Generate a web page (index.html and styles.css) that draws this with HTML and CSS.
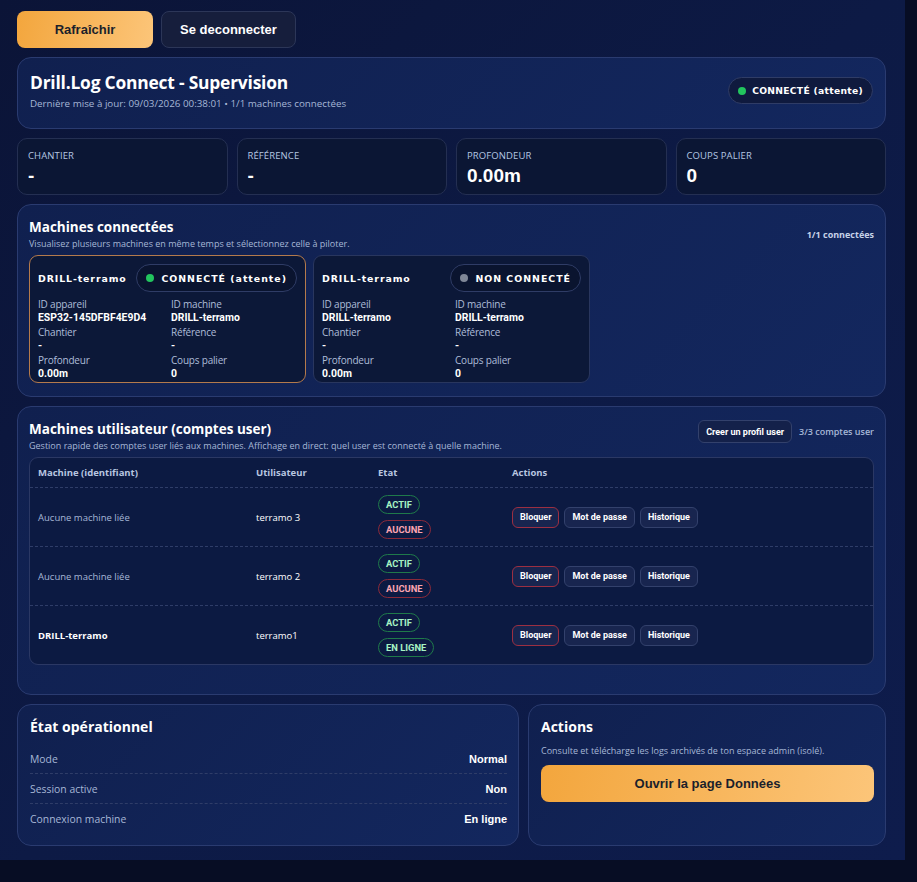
FILE: index.html
```html
<!DOCTYPE html>
<html lang="fr">
<head>
  <meta charset="UTF-8" />
  <meta name="viewport" content="width=device-width, initial-scale=1.0"/>
  <title>Drill.Log Connect - Supervision</title>
  <link rel="stylesheet" href="styles.css">
</head>
<body>
  <div class="page">

    <!-- Barre du haut -->
    <div class="toolbar">
      <button class="btn btn-primary">Rafraîchir</button>
      <button class="btn btn-dark">Se deconnecter</button>
    </div>

    <!-- En-tete -->
    <div class="card header">
      <div>
        <h1>Drill.Log Connect - Supervision</h1>
        <p class="muted small">Dernière mise à jour: 09/03/2026 00:38:01 • 1/1 machines connectées</p>
      </div>
      <span class="pill pill-head"><i class="dot dot-on"></i>CONNECTÉ (attente)</span>
    </div>

    <!-- Stats -->
    <div class="stats">
      <div class="stat"><span class="stat-label">CHANTIER</span><span class="stat-value">-</span></div>
      <div class="stat"><span class="stat-label">RÉFÉRENCE</span><span class="stat-value">-</span></div>
      <div class="stat"><span class="stat-label">PROFONDEUR</span><span class="stat-value">0.00m</span></div>
      <div class="stat"><span class="stat-label">COUPS PALIER</span><span class="stat-value">0</span></div>
    </div>

    <!-- Machines connectees -->
    <div class="card section">
      <div class="section-head">
        <div>
          <h2>Machines connectées</h2>
          <p class="muted tiny">Visualisez plusieurs machines en même temps et sélectionnez celle à piloter.</p>
        </div>
        <span class="count">1/1 connectées</span>
      </div>
      <div class="machines">
        <div class="machine selected">
          <div class="machine-top">
            <span class="machine-name">DRILL-terramo</span>
            <span class="pill pill-card"><i class="dot dot-on"></i>CONNECTÉ (attente)</span>
          </div>
          <div class="machine-grid">
            <div><span class="lbl">ID appareil</span><span class="val">ESP32-145DFBF4E9D4</span></div>
            <div><span class="lbl">ID machine</span><span class="val">DRILL-terramo</span></div>
            <div><span class="lbl">Chantier</span><span class="val">-</span></div>
            <div><span class="lbl">Référence</span><span class="val">-</span></div>
            <div><span class="lbl">Profondeur</span><span class="val">0.00m</span></div>
            <div><span class="lbl">Coups palier</span><span class="val">0</span></div>
          </div>
        </div>
        <div class="machine">
          <div class="machine-top">
            <span class="machine-name">DRILL-terramo</span>
            <span class="pill pill-card"><i class="dot dot-off"></i>NON CONNECTÉ</span>
          </div>
          <div class="machine-grid">
            <div><span class="lbl">ID appareil</span><span class="val">DRILL-terramo</span></div>
            <div><span class="lbl">ID machine</span><span class="val">DRILL-terramo</span></div>
            <div><span class="lbl">Chantier</span><span class="val">-</span></div>
            <div><span class="lbl">Référence</span><span class="val">-</span></div>
            <div><span class="lbl">Profondeur</span><span class="val">0.00m</span></div>
            <div><span class="lbl">Coups palier</span><span class="val">0</span></div>
          </div>
        </div>
      </div>
    </div>

    <!-- Comptes user -->
    <div class="card section users">
      <div class="section-head">
        <div>
          <h2>Machines utilisateur (comptes user)</h2>
          <p class="muted tiny">Gestion rapide des comptes user liés aux machines. Affichage en direct: quel user est connecté à quelle machine.</p>
        </div>
        <div class="head-actions">
          <button class="btn-sm">Creer un profil user</button>
          <span class="count light">3/3 comptes user</span>
        </div>
      </div>
      <div class="table">
        <div class="row thead">
          <span>Machine (identifiant)</span>
          <span>Utilisateur</span>
          <span>Etat</span>
          <span>Actions</span>
        </div>
        <div class="row">
          <span class="muted">Aucune machine liée</span>
          <span>terramo 3</span>
          <span class="tags"><b class="tag tag-ok">ACTIF</b><b class="tag tag-ko">AUCUNE</b></span>
          <span class="acts"><button class="btn-sm btn-red">Bloquer</button><button class="btn-sm">Mot de passe</button><button class="btn-sm">Historique</button></span>
        </div>
        <div class="row">
          <span class="muted">Aucune machine liée</span>
          <span>terramo 2</span>
          <span class="tags"><b class="tag tag-ok">ACTIF</b><b class="tag tag-ko">AUCUNE</b></span>
          <span class="acts"><button class="btn-sm btn-red">Bloquer</button><button class="btn-sm">Mot de passe</button><button class="btn-sm">Historique</button></span>
        </div>
        <div class="row">
          <span class="strong">DRILL-terramo</span>
          <span>terramo1</span>
          <span class="tags"><b class="tag tag-ok">ACTIF</b><b class="tag tag-ok">EN LIGNE</b></span>
          <span class="acts"><button class="btn-sm btn-red">Bloquer</button><button class="btn-sm">Mot de passe</button><button class="btn-sm">Historique</button></span>
        </div>
      </div>
    </div>

    <!-- Bas de page -->
    <div class="bottom">
      <div class="card panel">
        <h2>État opérationnel</h2>
        <div class="kv"><span>Mode</span><b>Normal</b></div>
        <div class="kv"><span>Session active</span><b>Non</b></div>
        <div class="kv"><span>Connexion machine</span><b>En ligne</b></div>
      </div>
      <div class="card panel">
        <h2>Actions</h2>
        <p class="muted tiny desc">Consulte et télécharge les logs archivés de ton espace admin (isolé).</p>
        <button class="btn btn-primary btn-wide">Ouvrir la page Données</button>
      </div>
    </div>

  </div>
</body>
</html>
```

FILE: styles.css
```css
/* Base */
body {
  margin: 0;
  background: #070d24;
  color: #fff;
  font-family: "Open Sans", "Noto Sans", sans-serif;
}
.page {
  width: 869px;
  padding: 11px 19px 14px 17px;
  background: linear-gradient(135deg, #0b1437 0%, #0d1a45 50%, #0e1c4c 100%);
  display: flex;
  flex-direction: column;
  gap: 9px;
}
h1, h2, p { margin: 0; }
.muted { color: #a6b7d6; }
.small { font-size: 9.8px; }
.tiny { font-size: 9px; }

/* Boutons */
.toolbar {
  display: flex;
  gap: 8px;
}
.btn {
  height: 37px;
  border-radius: 8px;
  font-family: "Liberation Sans", Arial, sans-serif;
  font-weight: bold;
  font-size: 13px;
  cursor: pointer;
}
.btn-primary {
  width: 136px;
  border: none;
  color: #1b1f2b;
  background: linear-gradient(100deg, #f3a63d 0%, #fcc579 100%);
}
.btn-dark {
  width: 135px;
  border: 1px solid #2c3658;
  color: #fff;
  background: #161e3c;
}

/* Cartes */
.card {
  background: linear-gradient(135deg, #10204f 0%, #13275e 100%);
  border: 1px solid #2a3b70;
  border-radius: 14px;
  box-sizing: border-box;
}
.header {
  height: 72px;
  padding: 12px 12px 0 12px;
  display: flex;
  justify-content: space-between;
  align-items: flex-start;
}
.header h1 {
  font-size: 17.4px;
  font-weight: 700;
  letter-spacing: -0.2px;
  margin-bottom: 3px;
}
.pill {
  display: inline-flex;
  align-items: center;
  border-radius: 999px;
  border: 1px solid #2f3c66;
  background: #0f1a3e;
  font-family: "DejaVu Sans", Verdana, sans-serif;
  font-weight: bold;
  white-space: nowrap;
}
.pill-head {
  margin-top: 7px;
  height: 25px;
  padding: 0 9px;
  font-size: 9.2px;
  letter-spacing: 0.3px;
  gap: 6px;
}
.dot {
  width: 8px;
  height: 8px;
  border-radius: 50%;
  display: inline-block;
}
.dot-on { background: #22c55e; }
.dot-off { background: #7f8797; }

/* Stats */
.stats {
  display: grid;
  grid-template-columns: repeat(4, 1fr);
  gap: 9px;
}
.stat {
  height: 57px;
  box-sizing: border-box;
  background: #0b1634;
  border: 1px solid #242f52;
  border-radius: 10px;
  padding: 10px 10px 0;
  display: flex;
  flex-direction: column;
}
.stat-label {
  font-size: 9.5px;
  color: #b4c6e2;
  letter-spacing: 0.1px;
}
.stat-value {
  font-size: 19px;
  font-weight: 800;
  margin-top: 3px;
  font-family: "Liberation Sans", Arial, sans-serif;
}

/* Sections */
.section {
  padding: 13px 11px 13px 11px;
}
.section-head {
  display: flex;
  justify-content: space-between;
  align-items: center;
  margin-bottom: 5px;
}
.section h2 {
  font-size: 13.5px;
  font-weight: 700;
  margin-bottom: 1px;
}
.count {
  font-size: 9px;
  font-weight: bold;
  color: #c6d2e8;
}
.count.light {
  font-weight: 600;
  color: #a6b7d6;
}

/* Machines */
.machines {
  display: flex;
  gap: 7px;
}
.machine {
  width: 277px;
  height: 128px;
  box-sizing: border-box;
  background: #0c1838;
  border: 1px solid #29365e;
  border-radius: 9px;
  padding: 8px 8px 0 8px;
}
.machine.selected {
  border-color: #b47a4c;
}
.machine-top {
  display: flex;
  justify-content: space-between;
  align-items: center;
  margin-bottom: 5px;
}
.machine-name {
  font-family: "DejaVu Sans", Verdana, sans-serif;
  font-weight: bold;
  font-size: 9.4px;
  letter-spacing: 0.9px;
}
.pill-card {
  height: 26px;
  padding: 0 9px;
  font-size: 9.4px;
  letter-spacing: 1px;
  gap: 7px;
  background: #0a142f;
}
.machine-grid {
  display: grid;
  grid-template-columns: 133px 1fr;
  row-gap: 1px;
}
.machine-grid div {
  display: flex;
  flex-direction: column;
}
.lbl {
  font-size: 10px;
  color: #aebdd8;
  line-height: 14px;
  letter-spacing: -0.2px;
}
.val {
  font-size: 10.4px;
  font-weight: 700;
  line-height: 13px;
  font-family: "Roboto", sans-serif;
}

/* Table utilisateurs */
.users {
  padding-bottom: 29px;
}
.head-actions {
  display: flex;
  align-items: center;
  gap: 7px;
  margin-top: -9px;
}
.btn-sm {
  height: 21px;
  padding: 0 7px;
  border-radius: 6px;
  border: 1px solid #33416c;
  background: #18254f;
  color: #fff;
  font-family: "Roboto", sans-serif;
  font-weight: 700;
  font-size: 9px;
  cursor: pointer;
}
.head-actions .btn-sm {
  height: 23px;
  background: #14214a;
}
.btn-red {
  border-color: #9c2f42;
}
.table {
  border: 1px solid #2b3864;
  border-radius: 9px;
  background: #0c1a42;
}
.row {
  display: grid;
  grid-template-columns: 218px 122px 134px 1fr;
  align-items: center;
  height: 59px;
  box-sizing: border-box;
  padding-left: 8px;
  font-size: 9.5px;
  border-top: 1px dashed #2f3d68;
}
.row.thead {
  height: 29px;
  border-top: none;
  font-weight: 700;
  color: #b8c6e0;
}
.strong { font-weight: 700; }
.tags {
  display: flex;
  flex-direction: column;
  align-items: flex-start;
  gap: 6px;
}
.tag {
  font-family: "Roboto", sans-serif;
  font-size: 9.4px;
  height: 19px;
  line-height: 18px;
  padding: 0 7px;
  border-radius: 999px;
  box-sizing: border-box;
}
.tag-ok {
  color: #a7f3c4;
  border: 1px solid #1f7a4a;
}
.tag-ko {
  color: #fca5b1;
  border: 1px solid #8b2a3a;
}
.acts {
  display: flex;
  gap: 5px;
}

/* Bas */
.bottom {
  display: grid;
  grid-template-columns: 502px 1fr;
  gap: 9px;
}
.panel {
  height: 142px;
  padding: 12px 11px 0 12px;
}
.panel h2 {
  font-size: 14px;
  font-weight: 700;
  margin-bottom: 8px;
}
.kv {
  display: flex;
  justify-content: space-between;
  align-items: center;
  height: 30px;
  box-sizing: border-box;
  font-size: 10.4px;
  color: #a6b7d6;
  border-bottom: 1px dashed #2f3d68;
}
.kv:last-child { border-bottom: none; }
.kv b {
  color: #fff;
  font-size: 11px;
  font-family: "Liberation Sans", Arial, sans-serif;
}
.desc {
  margin: 8px 0 8px;
}
.btn-wide {
  width: 100%;
  height: 37px;
  border: none;
}
```
